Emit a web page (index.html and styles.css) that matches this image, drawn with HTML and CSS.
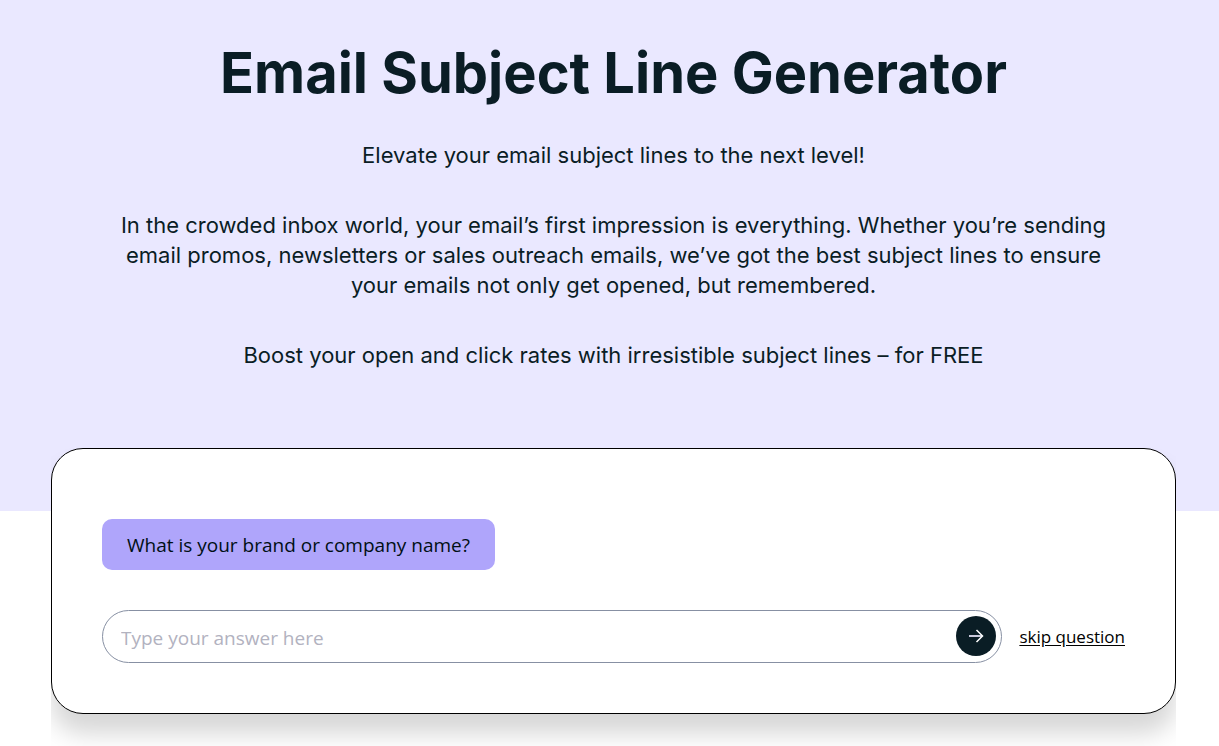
FILE: index.html
```html
<!DOCTYPE html>
<html lang="en">
<head>
<meta charset="utf-8">
<meta name="viewport" content="width=device-width, initial-scale=1">
<title>Email Subject Line Generator</title>
<link rel="stylesheet" href="styles.css">
</head>
<body>
<header class="hero">
  <h1 class="hero-title">Email Subject Line Generator</h1>
  <p class="hero-text">Elevate your email subject lines to the next level!</p>
  <p class="hero-text">In the crowded inbox world, your email’s first impression is everything. Whether you’re sending<br> email promos, newsletters or sales outreach emails, we’ve got the best subject lines to ensure<br> your emails not only get opened, but remembered.</p>
  <p class="hero-text">Boost your open and click rates with irresistible subject lines – for FREE</p>
</header>
<main class="tool">
  <form class="card">
    <label class="question" for="answer">What is your brand or company name?</label>
    <div class="answer-row">
      <div class="answer-box">
        <input class="answer-input" id="answer" type="text" placeholder="Type your answer here">
        <button class="send" type="button" aria-label="Send answer">
          <svg width="16" height="14" viewBox="0 0 16 14" fill="none" stroke="currentColor"><path d="M1 7H14" stroke="#c9c9dc" stroke-width="2"/><path d="M8.5 1L14.5 7L8.5 13" stroke-width="1.5"/></svg>
        </button>
      </div>
      <a class="skip" href="#">skip question</a>
    </div>
  </form>
</main>
</body>
</html>
```
FILE: styles.css
```css
* {
  box-sizing: border-box;
}

body {
  margin: 0;
  background: #fff;
  color: #0a1d25;
  font-family: "Open Sans", "Noto Sans", sans-serif;
}

.hero {
  padding: 40px 48px 141px 56px;
  background: #eae8ff;
  text-align: center;
  font-family: Inter, sans-serif;
}

.hero-title {
  margin: 0 0 34px;
  font-size: 56px;
  line-height: 66px;
  font-weight: 700;
}

.hero-text {
  margin: 0 0 40px;
  font-size: 22px;
  line-height: 30px;
}

.hero-text:last-child {
  margin-bottom: 0;
}

.tool {
  margin: -63px 43px 0 51px;
  padding-bottom: 32px;
  overflow: hidden;
}

.card {
  padding: 70px 50px 50px;
  border: 1px solid #000;
  border-radius: 32px;
  background: #fff;
  box-shadow: 0 20px 24px rgba(0, 0, 0, 0.16);
}

.question {
  display: inline-block;
  margin-bottom: 40px;
  padding: 13px 25px 11px;
  border-radius: 10px;
  background: #afa5fb;
  color: #000f14;
  font-size: 19px;
  line-height: 27px;
}

.answer-row {
  display: flex;
  align-items: center;
  gap: 17px;
}

.answer-box {
  display: flex;
  flex: 1;
  align-items: flex-start;
  padding: 5px 5px 5px 18px;
  border: 1px solid #8790a3;
  border-radius: 27px;
}

.answer-input {
  flex: 1;
  min-width: 0;
  height: 41px;
  padding: 2px 0 0;
  border: 0;
  outline: 0;
  background: none;
  color: inherit;
  font: 19px "Open Sans", "Noto Sans", sans-serif;
}

.answer-input::placeholder {
  color: #b2b2c0;
}

.send {
  display: grid;
  place-items: center;
  width: 40px;
  height: 40px;
  padding: 0;
  border: 0;
  border-radius: 50%;
  background: #0a1d25;
  color: #fff;
}

.skip {
  color: #000;
  font-size: 17px;
  line-height: 24px;
  text-underline-offset: 2px;
}
```
